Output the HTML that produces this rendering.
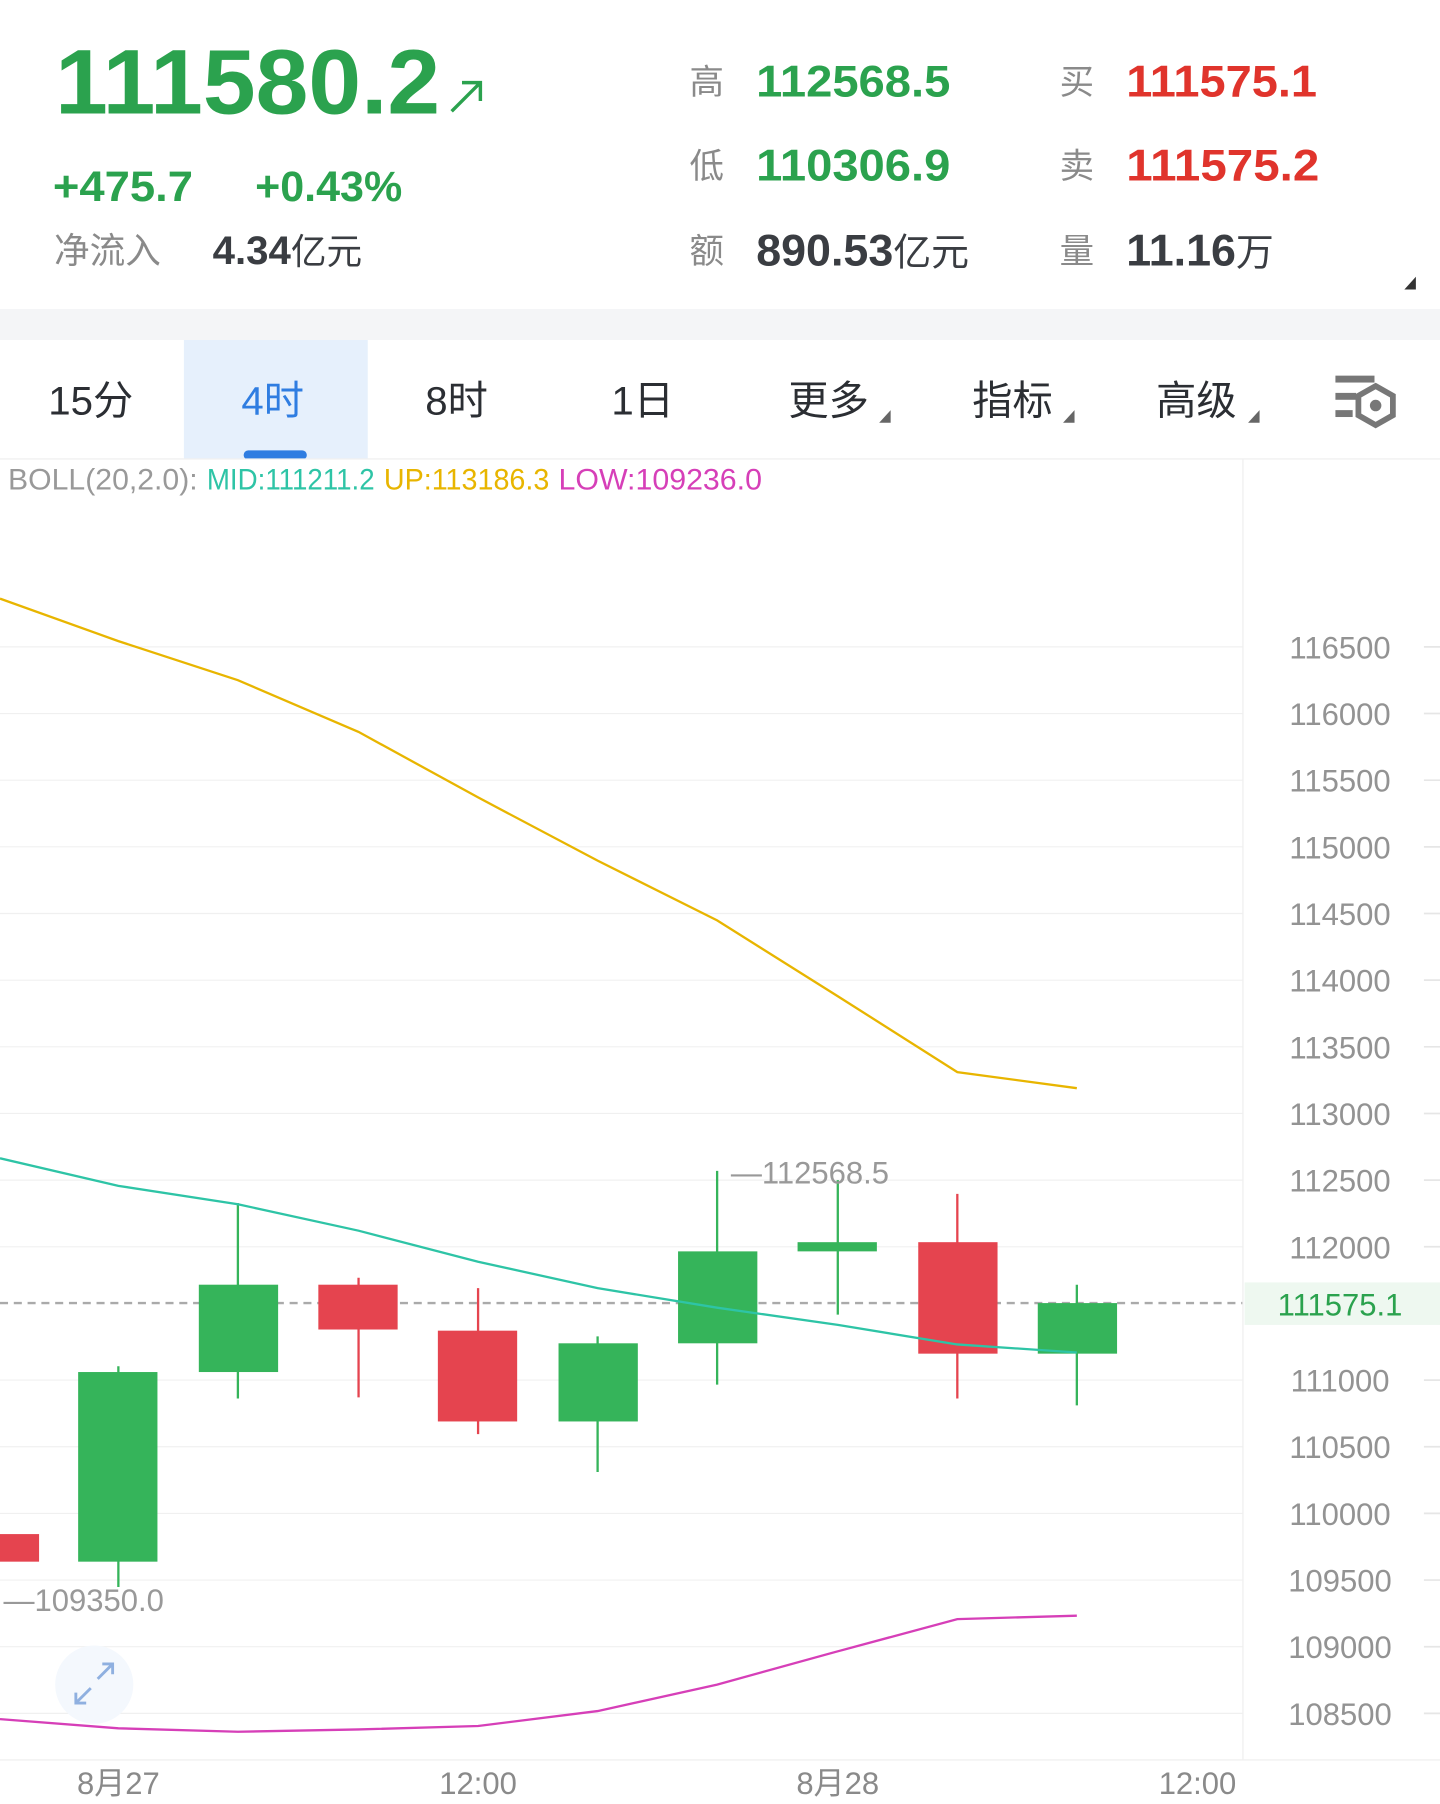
<!DOCTYPE html>
<html><head><meta charset="utf-8"><style>
html,body{margin:0;padding:0;background:#fff;width:1440px;height:1804px;overflow:hidden}
svg{display:block}
text{font-family:"Liberation Sans","Noto Sans CJK SC",sans-serif}
</style></head><body>
<svg width="1440" height="1804" viewBox="0 0 1253 1568" xmlns="http://www.w3.org/2000/svg">
<rect width="1253" height="1568" fill="#fff"/>
<!-- header -->
<text x="48" y="98" font-size="80" font-weight="bold" fill="#2ba24e" textLength="335" lengthAdjust="spacingAndGlyphs">111580.2</text>
<path d="M393 96 L418 71 M402 71 L418 71 L418 87" stroke="#2ba24e" stroke-width="3" fill="none"/>
<text x="46" y="174" font-size="37" font-weight="bold" fill="#2ba24e" textLength="122" lengthAdjust="spacingAndGlyphs">+475.7</text>
<text x="222" y="174" font-size="37" font-weight="bold" fill="#2ba24e" textLength="128" lengthAdjust="spacingAndGlyphs">+0.43%</text>
<text x="47" y="228" font-size="31" fill="#8a8a8a">净流入</text>
<text x="185" y="229" font-size="35" font-weight="bold" fill="#3a3d42">4.34<tspan font-size="31" font-weight="normal">亿元</tspan></text>
<g font-size="30" fill="#8a8a8a"><text x="600" y="81">高</text><text x="600" y="154">低</text><text x="600" y="228">额</text>
<text x="922" y="81">买</text><text x="922" y="154">卖</text><text x="922" y="228">量</text></g>
<g font-size="39" font-weight="bold" lengthAdjust="spacingAndGlyphs"><text x="658" y="83" fill="#2ba24e" textLength="169" lengthAdjust="spacingAndGlyphs">112568.5</text><text x="658" y="156" fill="#2ba24e" textLength="169" lengthAdjust="spacingAndGlyphs">110306.9</text>
<text x="658" y="230" fill="#3a3d42">890.53<tspan font-size="33" font-weight="normal">亿元</tspan></text>
<text x="980" y="83" fill="#e0342c" textLength="166" lengthAdjust="spacingAndGlyphs">111575.1</text><text x="980" y="156" fill="#e0342c" textLength="168" lengthAdjust="spacingAndGlyphs">111575.2</text>
<text x="980" y="230" fill="#3a3d42">11.16<tspan font-size="33" font-weight="normal">万</tspan></text></g>
<path d="M1222 251 L1232 251 L1232 240 Z" fill="#333"/>
<rect x="0" y="268" width="1253" height="27" fill="#f4f5f7"/>
<!-- tabs -->
<rect x="160" y="295" width="160" height="103" fill="#e6f0fc"/>
<rect x="212" y="391" width="55" height="8" rx="4" fill="#2f7de1"/>
<g font-size="35" fill="#2b2e33"><text x="42" y="360">15分</text><text x="210" y="360" fill="#2f7de1">4时</text>
<text x="370" y="360">8时</text><text x="532" y="360">1日</text><text x="686" y="360">更多</text><text x="846" y="360">指标</text><text x="1006" y="360">高级</text></g>
<g fill="#666"><path d="M765 367 L775 367 L775 356 Z"/><path d="M925 367 L935 367 L935 356 Z"/><path d="M1086 367 L1096 367 L1096 356 Z"/></g>
<g fill="#777"><rect x="1162" y="326" width="34" height="6"/><rect x="1162" y="341" width="18" height="6"/><rect x="1162" y="356" width="15" height="6"/></g>
<path d="M1197 335 L1212 343.5 L1212 360.5 L1197 369 L1182 360.5 L1182 343.5 Z" fill="none" stroke="#777" stroke-width="5"/>
<circle cx="1197" cy="352" r="5" fill="#777"/>
<line x1="0" y1="398.5" x2="1253" y2="398.5" stroke="#eee"/>
<g font-size="26"><text x="7" y="425" fill="#999" textLength="165" lengthAdjust="spacingAndGlyphs">BOLL(20,2.0):</text><text x="180" y="425" fill="#2ec4a6" textLength="146" lengthAdjust="spacingAndGlyphs">MID:111211.2</text><text x="334" y="425" fill="#e8b500" textLength="144" lengthAdjust="spacingAndGlyphs">UP:113186.3</text><text x="486" y="425" fill="#d63fb8" textLength="177" lengthAdjust="spacingAndGlyphs">LOW:109236.0</text></g>
<!-- grid -->
<g stroke="#f0f0f0" stroke-width="1">
<line x1="0" y1="562" x2="1081" y2="562"/><line x1="0" y1="620" x2="1081" y2="620"/><line x1="0" y1="678" x2="1081" y2="678"/><line x1="0" y1="736" x2="1081" y2="736"/><line x1="0" y1="794" x2="1081" y2="794"/><line x1="0" y1="852" x2="1081" y2="852"/><line x1="0" y1="910" x2="1081" y2="910"/><line x1="0" y1="968" x2="1081" y2="968"/><line x1="0" y1="1026" x2="1081" y2="1026"/><line x1="0" y1="1084" x2="1081" y2="1084"/><line x1="0" y1="1200" x2="1081" y2="1200"/><line x1="0" y1="1258" x2="1081" y2="1258"/><line x1="0" y1="1316" x2="1081" y2="1316"/><line x1="0" y1="1374" x2="1081" y2="1374"/><line x1="0" y1="1432" x2="1081" y2="1432"/><line x1="0" y1="1490" x2="1081" y2="1490"/>
</g>
<g stroke="#e6e6e6" stroke-width="1.5">
<line x1="1239" y1="562" x2="1253" y2="562"/><line x1="1239" y1="620" x2="1253" y2="620"/><line x1="1239" y1="678" x2="1253" y2="678"/><line x1="1239" y1="736" x2="1253" y2="736"/><line x1="1239" y1="794" x2="1253" y2="794"/><line x1="1239" y1="852" x2="1253" y2="852"/><line x1="1239" y1="910" x2="1253" y2="910"/><line x1="1239" y1="968" x2="1253" y2="968"/><line x1="1239" y1="1026" x2="1253" y2="1026"/><line x1="1239" y1="1084" x2="1253" y2="1084"/><line x1="1239" y1="1200" x2="1253" y2="1200"/><line x1="1239" y1="1258" x2="1253" y2="1258"/><line x1="1239" y1="1316" x2="1253" y2="1316"/><line x1="1239" y1="1374" x2="1253" y2="1374"/><line x1="1239" y1="1432" x2="1253" y2="1432"/><line x1="1239" y1="1490" x2="1253" y2="1490"/>
</g>
<line x1="1081.5" y1="399" x2="1081.5" y2="1530" stroke="#eee"/>
<line x1="0" y1="1530.5" x2="1253" y2="1530.5" stroke="#eee"/>
<g font-size="27" fill="#939393" text-anchor="middle">
<text x="1166" y="572">116500</text><text x="1166" y="630">116000</text><text x="1166" y="688">115500</text><text x="1166" y="746">115000</text><text x="1166" y="804">114500</text><text x="1166" y="862">114000</text><text x="1166" y="920">113500</text><text x="1166" y="978">113000</text><text x="1166" y="1036">112500</text><text x="1166" y="1094">112000</text><text x="1166" y="1210">111000</text><text x="1166" y="1268">110500</text><text x="1166" y="1326">110000</text><text x="1166" y="1384">109500</text><text x="1166" y="1442">109000</text><text x="1166" y="1500">108500</text>
</g>
<rect x="1083" y="1115" width="170" height="37" fill="#eef8f0"/>
<text x="1166" y="1144" font-size="27" fill="#2ba24e" text-anchor="middle">111575.1</text>
<line x1="0" y1="1133" x2="1081" y2="1133" stroke="#aaa" stroke-width="2" stroke-dasharray="7,5"/>
<!-- bands -->
<polyline fill="none" stroke="#e8b500" stroke-width="2" points="0,520 103,557 207,591 312,636 416,693 520,748 624,800 729,866 833,932 937,946"/>
<polyline fill="none" stroke="#d63fb8" stroke-width="2" points="0,1495 103,1503 207,1506 312,1504 416,1501 520,1488 624,1465 729,1436 833,1408 937,1405"/>
<!-- candles -->
<g stroke-width="2">
<rect x="0" y="1334" width="34" height="24" fill="#e5444f"/>
<line x1="103" y1="1188" x2="103" y2="1380" stroke="#35b45a"/><rect x="68" y="1193" width="69" height="165" fill="#35b45a"/>
<line x1="207" y1="1046" x2="207" y2="1216" stroke="#35b45a"/><rect x="173" y="1117" width="69" height="76" fill="#35b45a"/>
<line x1="312" y1="1111" x2="312" y2="1215" stroke="#e5444f"/><rect x="277" y="1117" width="69" height="39" fill="#e5444f"/>
<line x1="416" y1="1120" x2="416" y2="1247" stroke="#e5444f"/><rect x="381" y="1157" width="69" height="79" fill="#e5444f"/>
<line x1="520" y1="1162" x2="520" y2="1280" stroke="#35b45a"/><rect x="486" y="1168" width="69" height="68" fill="#35b45a"/>
<line x1="624" y1="1018" x2="624" y2="1204" stroke="#35b45a"/><rect x="590" y="1088" width="69" height="80" fill="#35b45a"/>
<line x1="729" y1="1026" x2="729" y2="1143" stroke="#35b45a"/><rect x="694" y="1080" width="69" height="8" fill="#35b45a"/>
<line x1="833" y1="1038" x2="833" y2="1216" stroke="#e5444f"/><rect x="799" y="1080" width="69" height="97" fill="#e5444f"/>
<line x1="937" y1="1117" x2="937" y2="1222" stroke="#35b45a"/><rect x="903" y="1133" width="69" height="44" fill="#35b45a"/>
</g>
<polyline fill="none" stroke="#2ec4a6" stroke-width="2" points="0,1007 103,1031 207,1047 312,1070 416,1097 520,1120 624,1137 729,1152 833,1169 937,1176"/>
<g font-size="27" fill="#999"><text x="636" y="1029">—112568.5</text><text x="3" y="1401">—109350.0</text></g>
<circle cx="82" cy="1465" r="34" fill="#f4f8fd"/>
<path d="M85 1460 L98 1447 M89 1447 L98 1447 L98 1456 M79 1468 L66 1481 M66 1472 L66 1481 L75 1481" stroke="#8fb0e0" stroke-width="2.5" fill="none"/>
<g font-size="27" fill="#8a8a8a" text-anchor="middle"><text x="103" y="1560">8月27</text><text x="416" y="1560">12:00</text><text x="729" y="1560">8月28</text><text x="1042" y="1560">12:00</text></g>
</svg>
</body></html>
